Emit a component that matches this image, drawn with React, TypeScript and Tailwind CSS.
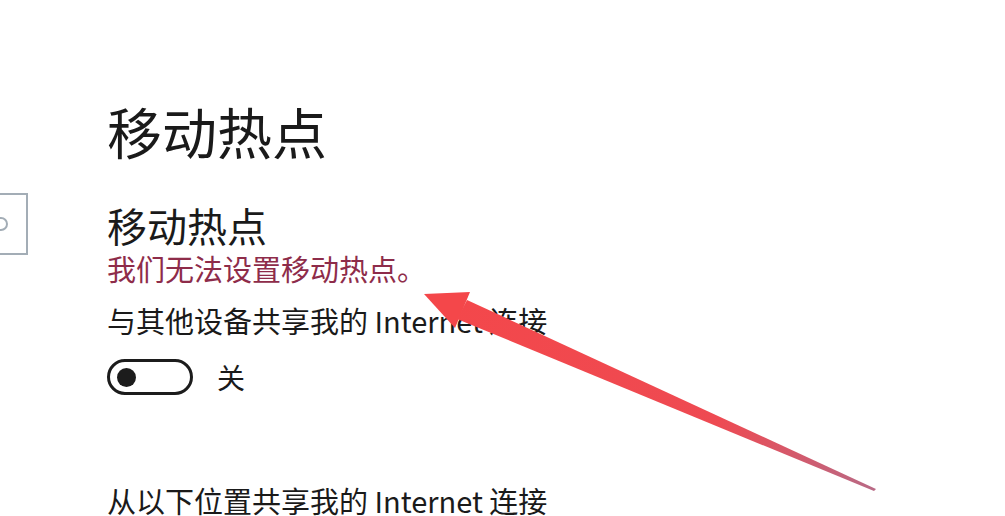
import React from 'react'

const cjk = { fontFamily: '"Noto Sans CJK SC", "Noto Sans", sans-serif' }

function Toggle() {
  return (
    <div className="flex items-center gap-[24px]">
      <div className="w-[86px] h-[36px] rounded-full border-[3px] border-[#1c1c1c] flex items-center pl-[7px]">
        <div className="w-[19px] h-[19px] rounded-full bg-[#1c1c1c]" />
      </div>
      <span className="text-[28px] leading-[36px] text-[#1a1a1a]">关</span>
    </div>
  )
}

function Arrow() {
  return (
    <svg className="absolute inset-0 pointer-events-none" width="1005" height="516" viewBox="0 0 1005 516">
      <defs>
        <linearGradient id="shaft" x1="425" y1="294" x2="875" y2="490" gradientUnits="userSpaceOnUse">
          <stop offset="0" stopColor="#f4474a" />
          <stop offset="0.65" stopColor="#ee4a52" />
          <stop offset="1" stopColor="#b86a86" />
        </linearGradient>
      </defs>
      <polygon points="424,294 470,292 455,328" fill="#f4474a" />
      <polygon points="457,319 467,300 876,489 874,491" fill="url(#shaft)" />
    </svg>
  )
}

export default function App() {
  return (
    <div className="relative w-[1005px] h-[516px] overflow-hidden bg-white flex" style={cjk}>
      <div className="w-[107px] shrink-0 pt-[193px]">
        <div className="w-[28px] h-[62px] border-[2px] border-l-0 border-[#a3adb6] flex items-center">
          <div className="w-[14px] h-[14px] -ml-[6px] rounded-full border-[2px] border-[#a3adb6]" />
        </div>
      </div>

      <div className="flex flex-col text-[#1a1a1a]">
        <h1 className="mt-[100px] text-[55px] leading-[60px] font-normal">移动热点</h1>
        <h2 className="mt-[44px] text-[40px] leading-[42px] font-normal">移动热点</h2>
        <p className="mt-[5px] text-[29px] leading-[34px] text-[#8e2c4a]">我们无法设置移动热点。</p>
        <p className="mt-[18px] text-[29px] leading-[34px]">与其他设备共享我的 Internet 连接</p>
        <div className="mt-[22px]">
          <Toggle />
        </div>
        <p className="mt-[89px] text-[29px] leading-[32px]">从以下位置共享我的 Internet 连接</p>
      </div>

      <Arrow />
    </div>
  )
}
